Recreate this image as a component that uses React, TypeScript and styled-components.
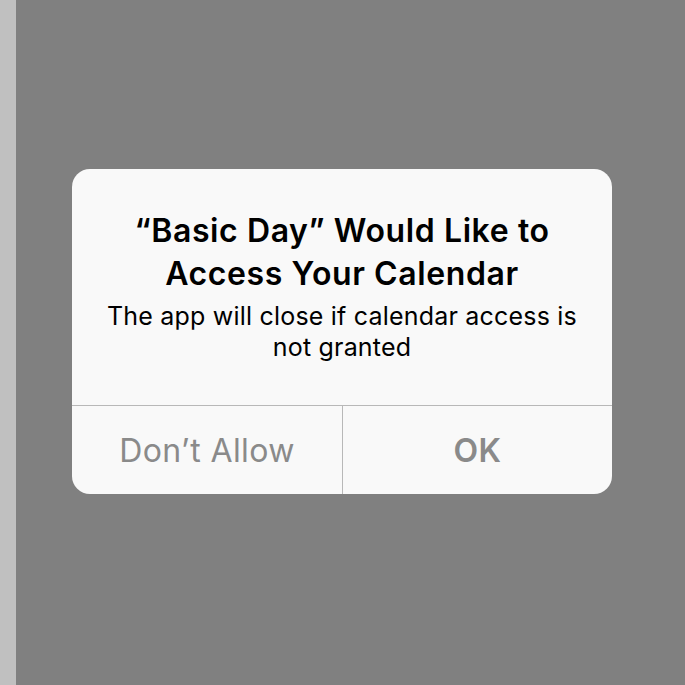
import React from "react";
import styled, { createGlobalStyle } from "styled-components";

const Global = createGlobalStyle`
  html, body { margin: 0; padding: 0; }
  body { background: #808080; font-family: Inter, "Noto Sans", "Liberation Sans", sans-serif; }
`;

const Screen = styled.div`
  display: flex;
  width: 685px;
  height: 685px;
  overflow: hidden;
`;

const Strip = styled.div`
  width: 16px;
  flex: none;
  background: #c0c0c0;
`;

const Main = styled.div`
  flex: 1;
  background: #808080;
  padding: 169px 0 0 56px;
`;

const Alert = styled.div`
  width: 540px;
  background: #f9f9f9;
  border-radius: 18px;
  overflow: hidden;
  display: flex;
  flex-direction: column;
`;

const Body = styled.div`
  height: 236px;
  box-sizing: border-box;
  padding: 40px 10px 0;
  text-align: center;
  color: #000;
`;

const Title = styled.div`
  font-size: 32px;
  font-weight: 600;
  line-height: 43px;
  letter-spacing: 0.6px;
`;

const Message = styled.div`
  margin-top: 6px;
  font-size: 25px;
  line-height: 31px;
  font-weight: 400;
  letter-spacing: 0.2px;
`;

const Buttons = styled.div`
  display: grid;
  grid-template-columns: 270px 1fr;
  height: 88px;
  border-top: 1px solid #b8b8b8;
`;

const Button = styled.div<{ $bold?: boolean; $divider?: boolean }>`
  display: flex;
  align-items: center;
  justify-content: center;
  font-size: 32px;
  letter-spacing: 0.4px;
  color: #8a8a8a;
  font-weight: ${(p) => (p.$bold ? 600 : 400)};
  border-left: ${(p) => (p.$divider ? "1px solid #b8b8b8" : "none")};
`;

export default function App() {
  return (
    <>
      <Global />
      <Screen>
        <Strip />
        <Main>
          <Alert>
            <Body>
              <Title>
                “Basic Day” Would Like to
                <br />
                Access Your Calendar
              </Title>
              <Message>
                The app will close if calendar access is
                <br />
                not granted
              </Message>
            </Body>
            <Buttons>
              <Button>Don’t Allow</Button>
              <Button $bold $divider>OK</Button>
            </Buttons>
          </Alert>
        </Main>
      </Screen>
    </>
  );
}
